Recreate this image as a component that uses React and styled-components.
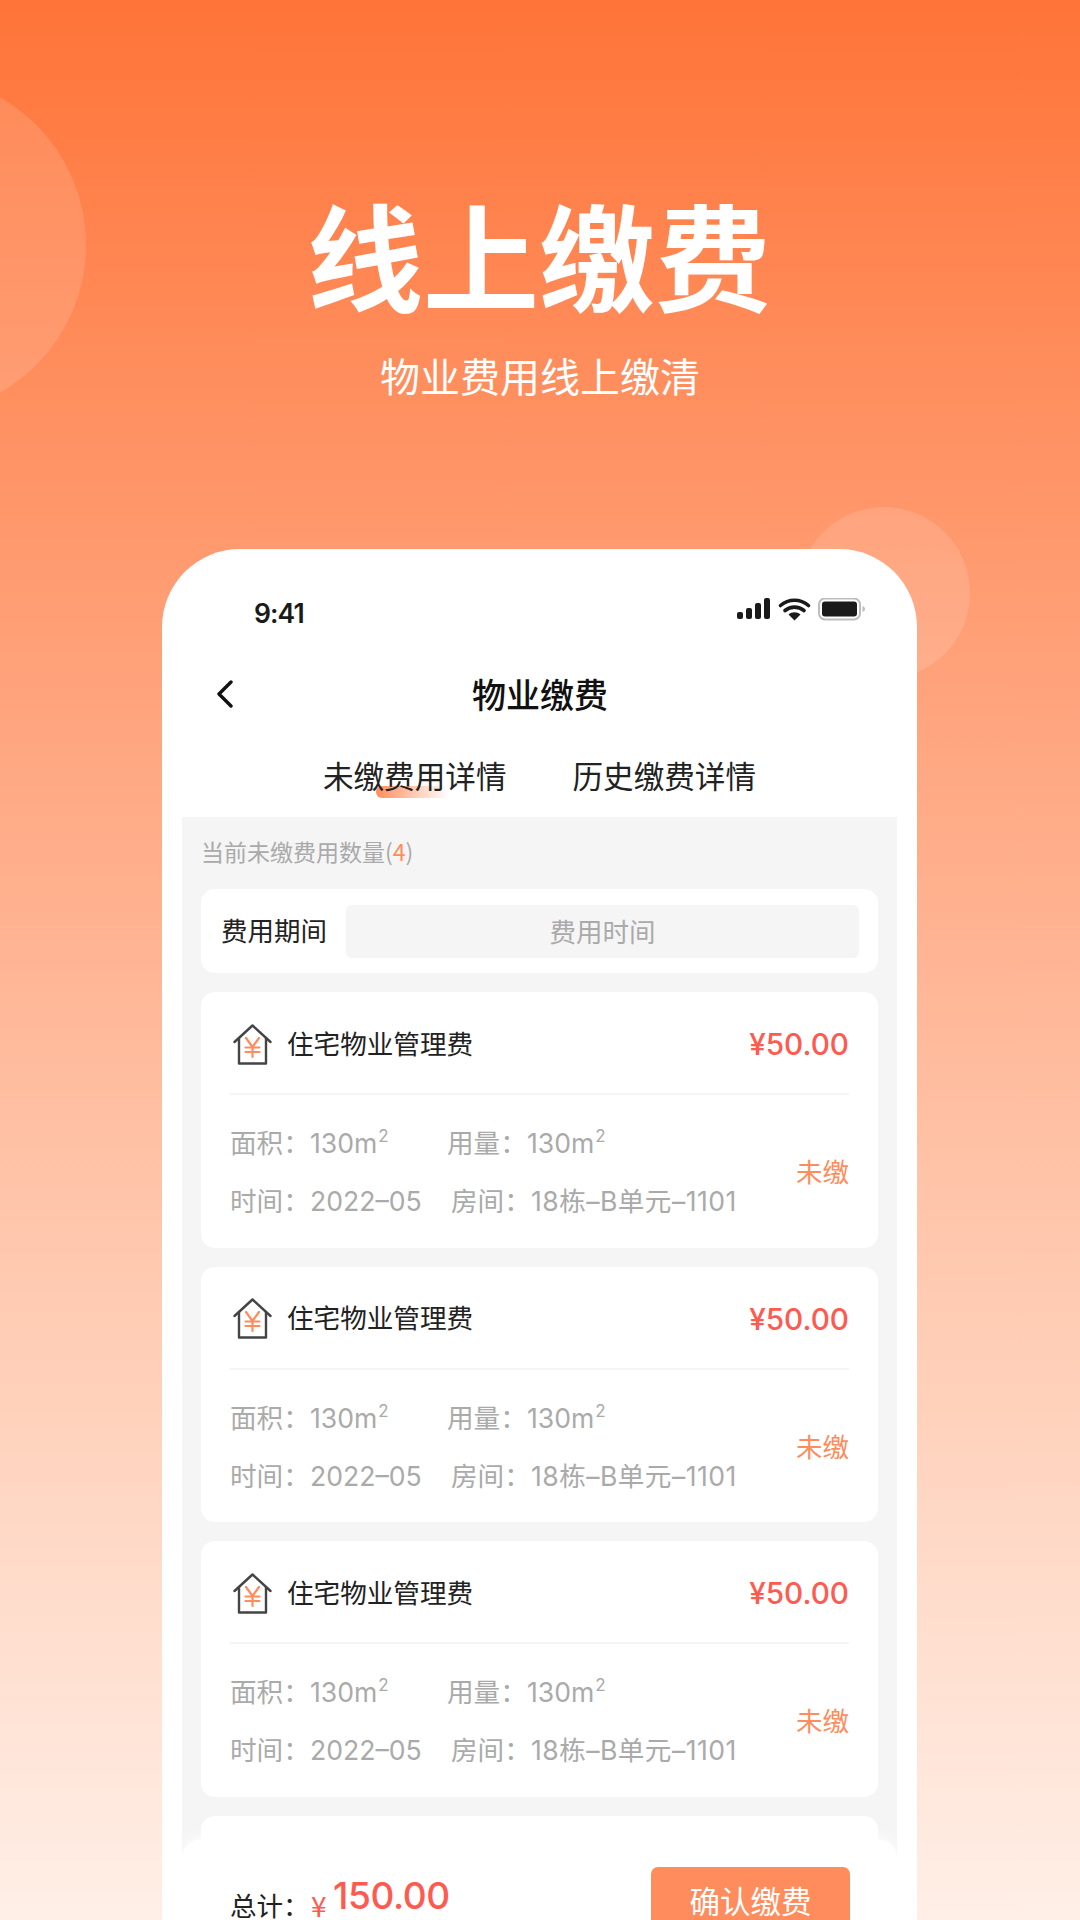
import React from "react";
import styled, { createGlobalStyle } from "styled-components";

const Global = createGlobalStyle`
  html, body { margin: 0; padding: 0; background: #fff; }
  * { box-sizing: border-box; }
  body { font-family: "Inter", "Noto Sans CJK SC", sans-serif; }
`;
const Page = styled.div`
  position: relative; width: 1080px; height: 1920px; overflow: hidden;
  background: linear-gradient(180deg, #ff7438 0%, #ff9e75 32%, #ffc8ae 65%, #ffefe7 100%);
`;
const Bubble = styled.div`
  position: absolute; border-radius: 50%; background: rgba(255,255,255,0.13);
  left: ${p => p.$x}px; top: ${p => p.$y}px; width: ${p => p.$d}px; height: ${p => p.$d}px;
`;
const Hero = styled.header`
  position: relative; height: 549px; padding-top: 194px; text-align: center; color: #fff;
`;
const HeroTitle = styled.h1`
  margin: 0 0 0 -2px; font: 700 116px/116px "Noto Sans CJK SC", sans-serif;
`;
const HeroSub = styled.p`
  margin: 42px 0 0; font: 400 40px/46px "Noto Sans CJK SC", sans-serif;
`;
const Phone = styled.section`
  position: relative; margin-left: 162px; width: 755px; height: 1371px; overflow: hidden;
  background: #fff; border-radius: 78px 78px 0 0; padding: 0 20px;
`;
const StatusBar = styled.div`
  display: flex; justify-content: space-between; align-items: flex-start;
  padding: 47px 32px 0 72px; height: 80px;
`;
const Time = styled.span`
  font: 600 26.5px/34px "Inter", sans-serif; letter-spacing: -0.9px; color: #1a1a1a;
`;
const StatusIcons = styled.svg`
  display: block; margin-top: 2px;
`;
const Nav = styled.nav`
  display: grid; grid-template-columns: 1fr auto 1fr; align-items: center;
  height: 100px; margin-top: 15px; padding-left: 34px;
`;
const NavTitle = styled.h2`
  margin: 0 0 0 -33px; font: 500 34px/44px "Noto Sans CJK SC", sans-serif; color: #111;
`;
const Tabs = styled.div`
  display: flex; justify-content: center; gap: 66px; height: 73px; padding-top: 9px;
`;
const Tab = styled.div`
  position: relative; isolation: isolate; font: 400 30.6px/44px "Noto Sans CJK SC", sans-serif; color: #222;
  ${p => p.$active && `
    &::after {
      content: ""; position: absolute; z-index: -1; left: 53px; top: 33px; width: 73px; height: 12px;
      border-radius: 6px 0 6px 6px;
      background: linear-gradient(90deg, #ff8c5c 0%, #ffd3bd 60%, rgba(255,255,255,0) 100%);
    }
  `}
`;
const Panel = styled.div`
  background: #f5f5f5; padding: 19px 19px 0; height: 1200px;
`;
const Count = styled.div`
  font: 400 23px/30px "Noto Sans CJK SC", sans-serif; color: #aaa; margin-bottom: 23px;
  em { font-style: normal; color: #ff8c5c; }
`;
const Filter = styled.div`
  display: flex; align-items: center; gap: 19px; height: 84px; padding: 0 19px 0 20px;
  background: #fff; border-radius: 14px; margin-bottom: 19.4px;
`;
const FilterLabel = styled.span`
  font: 400 26.5px/36px "Noto Sans CJK SC", sans-serif; color: #222; white-space: nowrap; margin-top: -3px;
`;
const FilterInput = styled.div`
  flex: 1; height: 53px; background: #f5f5f5; border-radius: 6px; text-align: center;
  font: 400 26.5px/51px "Noto Sans CJK SC", sans-serif; color: #aaa;
`;
const Card = styled.article`
  height: 255.4px; margin-bottom: 19px; padding: 0 29px; background: #fff; border-radius: 14px;
`;
const CardHead = styled.div`
  display: flex; align-items: center; height: 103px; padding-top: 4px; border-bottom: 2px solid #f5f5f5;
`;
const HouseIcon = styled.svg`
  display: block; margin: 0 14px 0 3px; flex: none;
`;
const CardTitle = styled.span`
  flex: 1; font: 400 26.6px/36px "Noto Sans CJK SC", sans-serif; color: #222; margin-top: -4px;
`;
const Amount = styled.span`
  font: 500 29.7px/36px "Inter", sans-serif; color: #ff5a50; margin-top: -1px;
`;
const CardBody = styled.div`
  display: flex; align-items: center; justify-content: space-between; padding-top: 19px;
`;
const Row = styled.div`
  display: flex; height: 58px; align-items: center;
`;
const Field = styled.div`
  width: ${p => p.$w ? p.$w + "px" : "auto"}; white-space: nowrap; display: flex;
  font: 400 26.6px/36px "Inter", "Noto Sans CJK SC", sans-serif; color: #aaa;
  sup { font-size: 17px; line-height: 1; margin-left: 1px; vertical-align: 11px; }
`;
const FieldLabel = styled.span`
  width: 80px; flex: none;
`;
const Room = styled.span`
  letter-spacing: 0.45px;
`;
const State = styled.span`
  font: 400 26.5px/36px "Noto Sans CJK SC", sans-serif; color: #ff8c5c; margin-top: -2px;
`;
const Bar = styled.footer`
  position: absolute; left: 20px; right: 20px; bottom: 0; height: 81px;
  display: flex; justify-content: space-between; align-items: flex-start;
  padding: 28px 47px 0 48px; background: #fff; border-radius: 20px 20px 0 0;
  box-shadow: 0 -4px 12px rgba(255,255,255,0.75);
`;
const Total = styled.div`
  display: flex; align-items: flex-start;
`;
const TotalLabel = styled.span`
  width: 81px; margin-top: 24px; font: 400 26.5px/28px "Noto Sans CJK SC", sans-serif; color: #222;
`;
const Yen = styled.span`
  width: 22px; margin-top: 24px; font: 400 28px/28px "Noto Sans CJK SC", sans-serif; color: #ff5a50;
`;
const Sum = styled.span`
  margin-top: 6px; font: 500 37px/46px "Inter", sans-serif; letter-spacing: -0.4px; color: #ff5a50;
`;
const Pay = styled.button`
  width: 199px; height: 53px; border: 0; border-radius: 7px 7px 0 0; background: #ff8c5c; color: #fff;
  padding: 13px 0 0; font: 400 30.5px/40px "Noto Sans CJK SC", sans-serif;
`;

const House = () => (
  <HouseIcon width="40" height="42" viewBox="0 0 40 42" fill="none" strokeLinecap="round" strokeLinejoin="round">
    <path d="M1.5 18L19.5 1.5L37.5 18" stroke="#444" strokeWidth="2.4" />
    <path d="M6 14V39.5H33V14" stroke="#444" strokeWidth="2.4" />
    <path d="M13 14L19.5 23V33M26 14L19.5 23M12.5 23.5H26.5M12.5 28H26.5" stroke="#ff8c5c" strokeWidth="2.2" />
  </HouseIcon>
);

const Status = () => (
  <StatusIcons width="128" height="26" viewBox="0 0 128 26" fill="none">
    <g fill="#1a1a1a">
      <rect x="0" y="14" width="6" height="7" rx="2" />
      <rect x="9" y="10" width="6" height="11" rx="2" />
      <rect x="18" y="5" width="6" height="16" rx="2" />
      <rect x="27" y="0" width="6" height="21" rx="2" />
    </g>
    <path d="M43.5 7.5C51.5 0.5 63.5 0.5 71.5 7.5M48 12.5C53.5 8 61.5 8 67 12.5" stroke="#1a1a1a" strokeWidth="3.6" strokeLinecap="round" />
    <path d="M51.5 16.5C55 13.5 60 13.5 63.5 16.5L57.5 22.5Z" fill="#1a1a1a" />
    <rect x="82" y="0.5" width="41" height="21" rx="6" stroke="#bdbdbd" strokeWidth="2" />
    <rect x="85" y="3.5" width="35" height="15" rx="3" fill="#1a1a1a" />
    <path d="M125.5 8V14C127 13.5 128 12.5 128 11S127 8.5 125.5 8Z" fill="#bdbdbd" />
  </StatusIcons>
);

const FeeCard = () => (
  <Card>
    <CardHead>
      <House />
      <CardTitle>住宅物业管理费</CardTitle>
      <Amount>¥50.00</Amount>
    </CardHead>
    <CardBody>
      <div>
        <Row>
          <Field $w={217}><FieldLabel>面积：</FieldLabel><span>130m<sup>2</sup></span></Field>
          <Field><FieldLabel>用量：</FieldLabel><span>130m<sup>2</sup></span></Field>
        </Row>
        <Row>
          <Field $w={221}><FieldLabel>时间：</FieldLabel><span>2022–05</span></Field>
          <Field><FieldLabel>房间：</FieldLabel><Room>18栋–B单元–1101</Room></Field>
        </Row>
      </div>
      <State>未缴</State>
    </CardBody>
  </Card>
);

export default function App() {
  return (
    <Page>
      <Global />
      <Bubble $x={-254} $y={75} $d={340} />
      <Bubble $x={798} $y={507} $d={172} />
      <Hero>
        <HeroTitle>线上缴费</HeroTitle>
        <HeroSub>物业费用线上缴清</HeroSub>
      </Hero>
      <Phone>
        <StatusBar>
          <Time>9:41</Time>
          <Status />
        </StatusBar>
        <Nav>
          <svg width="18" height="28" viewBox="0 0 18 28" fill="none">
            <path d="M15 2L3 14L15 26" stroke="#111" strokeWidth="3.4" strokeLinecap="round" strokeLinejoin="round" />
          </svg>
          <NavTitle>物业缴费</NavTitle>
          <span />
        </Nav>
        <Tabs>
          <Tab $active>未缴费用详情</Tab>
          <Tab>历史缴费详情</Tab>
        </Tabs>
        <Panel>
          <Count>当前未缴费用数量(<em>4</em>)</Count>
          <Filter>
            <FilterLabel>费用期间</FilterLabel>
            <FilterInput>费用时间</FilterInput>
          </Filter>
          <FeeCard />
          <FeeCard />
          <FeeCard />
          <Card />
        </Panel>
        <Bar>
          <Total>
            <TotalLabel>总计：</TotalLabel>
            <Yen>¥</Yen>
            <Sum>150.00</Sum>
          </Total>
          <Pay>确认缴费</Pay>
        </Bar>
      </Phone>
    </Page>
  );
}
